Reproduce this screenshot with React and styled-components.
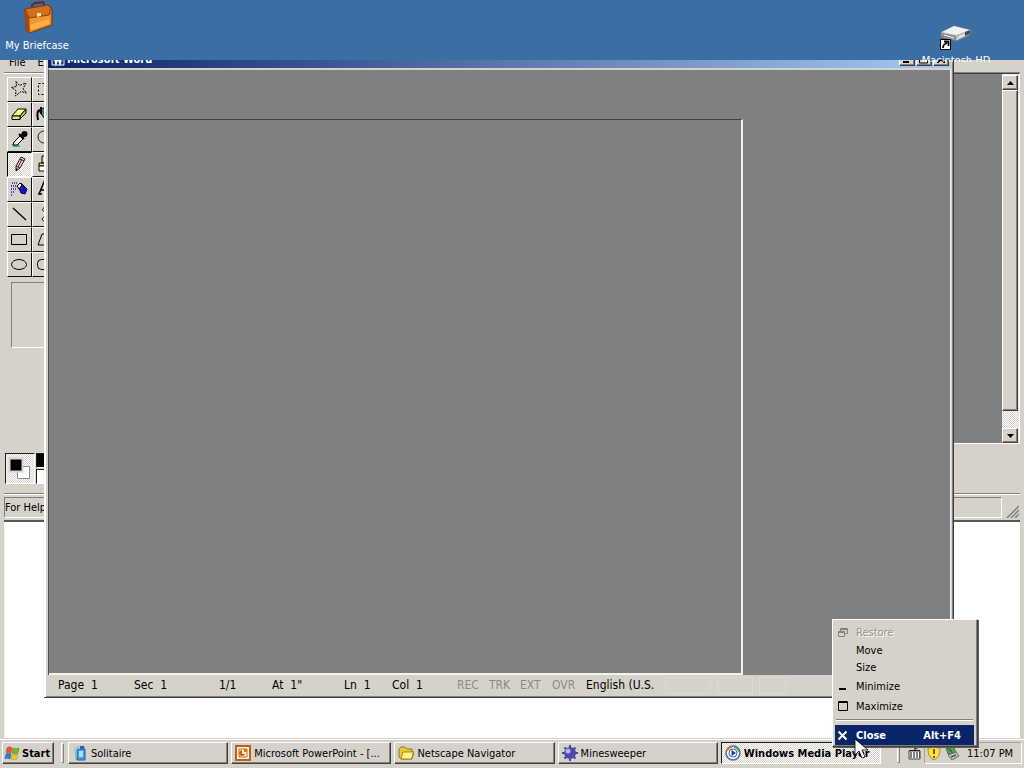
import React from 'react';
import styled, { createGlobalStyle, css } from 'styled-components';

const face = '#d6d2ca';
const dither = 'repeating-conic-gradient(#ffffff 0 25%, #d6d2ca 0 50%) 0 0 / 2px 2px';

const GlobalStyle = createGlobalStyle`
  * { box-sizing: border-box; }
  body {
    margin: 0;
    font-family: "DejaVu Sans Condensed", "Noto Sans", sans-serif;
    font-size: 11px;
    color: #000;
    overflow: hidden;
  }
  button { font: inherit; color: inherit; padding: 0; margin: 0; border: 0; background: none; cursor: default; }
  svg { display: block; flex: none; }
`;

const raised = css`
  background: ${face};
  border: 1px solid;
  border-color: #fff #404040 #404040 #fff;
  box-shadow: inset -1px -1px 0 #808080;
`;

const Desktop = styled.main`
  position: relative;
  display: flex;
  flex-direction: column;
  height: 100vh;
  min-height: 480px;
`;

const Wallpaper = styled.section`
  position: relative;
  z-index: 2;
  display: flex;
  justify-content: space-between;
  height: 60px;
  background: #3a6ea5;
`;

const Shortcut = styled.button`
  display: flex;
  flex-direction: column;
  align-items: center;
  justify-content: flex-start;
  gap: 4px;
  width: 74px;
  height: 62px;
  padding-top: 1px;
  overflow: hidden;
  color: #fff;
  white-space: nowrap;
  line-height: 14px;
`;

const RightShortcut = styled(Shortcut)`
  width: 136px;
  padding-top: 21px;
`;

const Windows = styled.section`
  position: relative;
  flex: 1;
  overflow: hidden;
  background: #fff;
  border: solid ${face};
  border-width: 0 4px 1px;
  box-shadow: inset 1px 0 0 #f4f2ee;
`;

const BrowserEdge = styled.div`
  position: absolute;
  top: 0;
  bottom: 0;
  left: -4px;
  right: -4px;
  border: solid;
  border-width: 0 2px 0 1px;
  border-color: #585858 #585858 #585858 #b0aca4;
`;

const PaintWindow = styled.section`
  position: absolute;
  top: -8px;
  left: -4px;
  right: -4px;
  height: 470px;
  display: flex;
  flex-direction: column;
  padding: 0 4px 2px;
  background: ${face};
  border-bottom: 2px solid #585858;
  box-shadow: inset 1px 0 0 ${face}, inset 2px 0 0 #fff, inset -1px 0 0 #404040, inset -2px 0 0 #808080;
`;

const MenuBar = styled.nav`
  display: flex;
  gap: 12px;
  height: 20px;
  padding-left: 5px;
  align-items: center;
`;

const PaintBody = styled.div`
  flex: 1;
  display: flex;
  min-height: 0;
  border-top: 1px solid #808080;
  box-shadow: inset 0 1px 0 #fff;
`;

const ToolPanel = styled.div`
  width: 58px;
  padding: 4px 3px;
`;

const ToolGrid = styled.div`
  display: grid;
  grid-template-columns: 25px 25px;
  grid-auto-rows: 25px;
`;

const Tool = styled.button`
  display: flex;
  align-items: center;
  justify-content: center;
  background: ${(p) => (p.$active ? dither : face)};
  border: 1px solid;
  border-color: ${(p) => (p.$active ? '#000 #fff #fff #000' : '#fff #101010 #101010 #fff')};
  & > svg { margin: 0 2px 2px 0; }
`;

const ToolOptions = styled.div`
  height: 66px;
  margin: 5px 4px;
  border: 1px solid;
  border-color: #808080 #fff #fff #808080;
`;

const CanvasFrame = styled.div`
  flex: 1;
  display: flex;
  border: 1px solid;
  border-color: #404040 #fff #fff #404040;
`;

const Canvas = styled.div`
  flex: 1;
  background: #808080;
`;

const ScrollBar = styled.div`
  display: flex;
  flex-direction: column;
  width: 17px;
  padding: 1px 1px 0 0;
  background: ${dither};
`;

const ScrollButton = styled.button`
  ${raised}
  display: flex;
  align-items: center;
  justify-content: center;
  height: 15px;
`;

const ScrollThumb = styled.div`
  ${raised}
  flex: 1;
  margin-bottom: 17px;
`;

const Palette = styled.div`
  display: flex;
  gap: 1px;
  height: 50px;
  padding: 9px 1px;
  border-bottom: 1px solid #808080;
  box-shadow: 0 1px 0 #fff;
`;

const CurrentColours = styled.div`
  width: 30px;
  height: 31px;
  background: ${dither};
  border: 1px solid;
  border-color: #202020 #fff #fff #202020;
`;

const Swatches = styled.div`
  display: grid;
  grid-template-columns: 16px 16px;
  grid-auto-rows: 15px;
  gap: 1px;
`;

const Swatch = styled.div`
  background: ${(p) => p.$colour};
  border: 1px solid;
  border-color: #202020 #fff #fff #202020;
`;

const PaintStatus = styled.footer`
  display: flex;
  gap: 4px;
  height: 24px;
  padding-top: 3px;
`;

const StatusText = styled.div`
  flex: 1;
  display: flex;
  align-items: center;
  border: 1px solid;
  border-color: #808080 #fff #fff #808080;
`;

const Grip = styled.div`
  display: flex;
  align-items: flex-end;
  width: 14px;
`;

const WordWindow = styled.section`
  position: absolute;
  top: -14px;
  left: 40px;
  right: 66px;
  height: 652px;
  display: flex;
  flex-direction: column;
  padding: 4px 2px 1px 4px;
  background: ${face};
  border: 0 solid #404040;
  border-width: 0 1px 1px 0;
  box-shadow: inset 2px 0 0 #fff, inset -1px -1px 0 #808080;
`;

const TitleBar = styled.header`
  display: flex;
  align-items: center;
  height: 18px;
  padding: 0 2px;
  gap: 1px;
  color: #fff;
  font-weight: bold;
  background: linear-gradient(to right, #0a246a, #a6caf0);
`;

const TitleText = styled.h1`
  flex: 1;
  margin: 0;
  font-size: 11px;
`;

const TitleButton = styled.button`
  ${raised}
  width: 16px;
  height: 14px;
  display: flex;
  align-items: center;
  justify-content: center;
`;

const Workspace = styled.div`
  flex: 1;
  display: flex;
  padding-top: 49px;
  background: #808080;
  border: solid;
  border-width: 2px 1px 0 1px;
  border-color: ${face} #f4f2ee #fff #505050;
`;

const DocumentPane = styled.div`
  width: 77%;
  border: solid;
  border-width: 1px 2px 2px 0;
  border-color: #404040 #f4f2ee #f4f2ee #404040;
`;

const WordStatus = styled.footer`
  display: flex;
  align-items: center;
  height: 21px;
  padding-left: 5px;
  font-size: 12px;
  white-space: pre;
`;

const StatusCell = styled.span`
  width: ${(p) => p.$width}px;
  height: 17px;
  padding-left: 5px;
  line-height: 17px;
  color: ${(p) => (p.$off ? '#8c8a84' : '#000')};
`;

const StatusBox = styled.span`
  width: ${(p) => p.$width}px;
  height: 17px;
  margin-right: 6px;
  border: 1px solid #dedad0;
`;

const TaskBar = styled.footer`
  position: relative;
  z-index: 3;
  display: flex;
  align-items: flex-start;
  height: 29px;
  padding: 3px 2px 0;
  background: ${face};
  box-shadow: inset 0 1px 0 #fff;
`;

const StartButton = styled.button`
  ${raised}
  display: flex;
  align-items: center;
  gap: 1px;
  width: 52px;
  height: 22px;
  padding-left: 1px;
  font-weight: bold;
`;

const Handle = styled.div`
  width: 3px;
  height: 20px;
  margin: 1px ${(p) => p.$after}px 0 ${(p) => p.$before}px;
  border: 1px solid;
  border-color: #fff #808080 #808080 #fff;
`;

const TaskList = styled.div`
  flex: 1;
  display: flex;
  gap: 3px;
  min-width: 0;
`;

const Task = styled.button`
  ${raised}
  flex: 1 1 0;
  display: flex;
  align-items: center;
  gap: 3px;
  height: 22px;
  min-width: 0;
  padding: 0 3px;
  white-space: nowrap;
  ${(p) => p.$active && css`
    background: ${dither};
    border-color: #202020 #fff #fff #202020;
    box-shadow: none;
    font-weight: bold;
  `}
`;

const KeyboardButton = styled.button`
  display: flex;
  align-items: center;
  height: 22px;
`;

const Tray = styled.div`
  display: flex;
  align-items: center;
  gap: 2px;
  width: 98px;
  height: 22px;
  margin-left: 3px;
  padding-left: 1px;
  border: 1px solid;
  border-color: #a8a49c #fff #fff #a8a49c;
`;

const Clock = styled.time`
  margin-left: 5px;
  white-space: nowrap;
`;

const ContextMenu = styled.div`
  position: absolute;
  z-index: 4;
  right: 46px;
  bottom: 21px;
  width: 146px;
  padding: 2px 3px 1px 2px;
  background: ${face};
  border: 1px solid;
  border-color: #fff #404040 #404040 #fff;
  box-shadow: inset -1px -1px 0 #808080, 1px 1px 0 #606060;
`;

const MenuItem = styled.button`
  display: grid;
  grid-template-columns: 19px 1fr auto;
  align-items: center;
  width: 100%;
  height: ${(p) => (p.$icon ? 20 : 17)}px;
  padding: 0 13px 0 2px;
  text-align: left;
  &:disabled { color: #96938d; text-shadow: 1px 1px 0 #fff; }
  ${(p) => p.$selected && css`
    background: #0a246a;
    color: #fff;
    font-weight: bold;
  `}
`;

const MenuLine = styled.div`
  height: 2px;
  margin: 3px 1px 4px;
  border-top: 1px solid #808080;
  border-bottom: 1px solid #fff;
`;

const Pointer = styled.svg`
  position: absolute;
  z-index: 5;
  right: 153px;
  bottom: 8px;
`;

const Pic = ({ w = 16, h = w, children, ...rest }) => (
  <svg width={w} height={h} viewBox={`0 0 ${w} ${h}`} fill="none" aria-hidden="true" {...rest}>{children}</svg>
);

const toolIcons = [
  ['Free-form select', <Pic w={18}><path d="M6 1.500l3.500 4L16 3l-3 6 3.500 4-5.500-1.500L5.500 16 6 10.500 1.500 7.500l5-1z" stroke="#000" strokeDasharray="2 1" /></Pic>],
  ['Select', <Pic w={18}><path d="M3.500 3.500h13v11h-13z" stroke="#000" strokeDasharray="2 2" /></Pic>],
  ['Eraser', <Pic w={18}><path d="M2 11l6-7h8l-6 7z" fill="#ffff90" stroke="#000" /><path d="M10 11l6-7v4l-6 6z" fill="#c8c86c" stroke="#000" /><path d="M2 11h8v3.500H2z" fill="#eeee88" stroke="#000" /></Pic>],
  ['Fill', <Pic w={18}><path d="M4 6l6-4 6 6-6 6z" fill="#3f8b80" stroke="#000" /><path d="M5 5C2 5 2 10 3 15M6 2v7" stroke="#000" strokeWidth="2" /></Pic>],
  ['Pick colour', <Pic w={18}><path d="M2 14h7l1 3H3z" fill="#38b09c" /><path d="M3 15l1-3 6-6 3 3-6 6z" fill="#e8fff8" stroke="#000" /><path d="M9 4l5 5M11 6l3-3" stroke="#000" strokeWidth="2" /><circle cx="14.500" cy="4" r="3" fill="#000" /></Pic>],
  ['Magnifier', <Pic w={18}><circle cx="9" cy="7" r="6" stroke="#202020" /><path d="M13 11l4 5" stroke="#000" strokeWidth="2" /></Pic>],
  ['Pencil', <Pic w={18}><path d="M6 11l5-9 4 2-5 9-4 3z" fill="#e8d8d0" stroke="#301010" /><path d="M10 4l4 2M6 11l4 2M12 4l-4 8" stroke="#501818" /><path d="M6 13l2 1-2 2z" fill="#000" /></Pic>],
  ['Brush', <Pic w={18}><path d="M7 1h3v7H7zM4 8h9v3H4z" fill="#f0d890" stroke="#000" /><path d="M4 11h9v5H4z" fill="#fff" stroke="#000" /></Pic>],
  ['Airbrush', <Pic w={18}><path d="M8 6l3-3 6 6-2 5-4-1z" fill="#1818b0" stroke="#000060" /><path d="M7 6l3-3 2 2-3 4z" fill="#fff" stroke="#000" /><path d="M2 3h5M1 6h6M1 9h5M1 12h3M1 15h2" stroke="#4444c0" strokeDasharray="1 1" strokeWidth="2" /></Pic>],
  ['Text', <Pic w={18}><path d="M3 14h4M4 14l5-12 4 12M11 14h5M6 10h6" stroke="#000" strokeWidth="1.5" /></Pic>],
  ['Line', <Pic w={18}><path d="M3 3l13 12" stroke="#000" strokeWidth="1.300" /></Pic>],
  ['Curve', <Pic w={18}><path d="M10 2c-8 5 6 4 0 9-4 3-4 4 1 6" stroke="#000" /></Pic>],
  ['Rectangle', <Pic w={18}><path d="M1.500 4.500h15v10h-15z" stroke="#000" /></Pic>],
  ['Polygon', <Pic w={18}><path d="M3 15l4-11h6l-2 6h6v5z" stroke="#000" /></Pic>],
  ['Ellipse', <Pic w={18}><ellipse cx="9" cy="9.500" rx="7.500" ry="5" stroke="#000" /></Pic>],
  ['Rounded rectangle', <Pic w={18}><rect x="2.500" y="4.500" width="15" height="10" rx="4" stroke="#000" /></Pic>],
];

const Briefcase = () => (
  <Pic w={32} h={34}>
    <path d="M11 7V4l3-2 8-1 1 2v4" stroke="#6d2617" strokeWidth="2" />
    <path d="M4 8L27 4l4 3v17L9 32l-4-3z" fill="#e8801c" stroke="#713510" />
    <path d="M7 11l22-4v16L9 30z" fill="#f29530" />
    <path d="M4 8l23-4 3 3-2 7-20 3z" fill="#d0701d" stroke="#8b3d10" />
    <path d="M3 9l2 20 4 3-1-17z" fill="#a4480f" />
    <path d="M9 24l19-6v5L10 29z" fill="#ffb149" />
    <path d="M16 12h4v3l-4 1z" fill="#ffe29a" />
  </Pic>
);

const Drive = () => (
  <Pic w={32} h={29}>
    <path d="M1 11L14 5l17 4-1 5-14 6-15-4z" fill="#b9b9bd" stroke="#707478" />
    <path d="M2 11L14 5l16 4-14 5z" fill="#eef3f6" />
    <path d="M2 12l14 3v4L2 16z" fill="#88898d" />
    <path d="M17 16l13-6v3l-13 6z" fill="#d2d2d4" />
    <path d="M4 14l10 3M19 16l5-2" stroke="#f4f4f4" />
    <path d="M25 11l5-2v4l-5 2z" fill="#4d4860" />
    <path d="M.5 18.500h10v10H.5z" fill="#fff" stroke="#000" />
    <path d="M3 27c0-3 1-4 4-5M4 20.500h4.500V25" stroke="#000" strokeWidth="1.8" />
  </Pic>
);

const StartLogo = () => (
  <Pic w={17} h={16}>
    <path d="M3 3c2-2 4-1 5 0L7 8C5 7 4 7 2 8z" fill="#e8582c" stroke="#9b4b38" strokeWidth=".5" />
    <path d="M9 3c2 1 4 1 6 0l-1 5c-2 1-4 1-6 0z" fill="#7eb52c" stroke="#4c7b2b" strokeWidth=".5" />
    <path d="M2 9c2-1 3-1 5 0l-1 5c-2-1-4-1-5 0z" fill="#347cd7" stroke="#284c91" strokeWidth=".5" />
    <path d="M8 9c2 1 4 1 6 0l-1 5c-2 1-4 1-6 0z" fill="#f3c62c" stroke="#a38a2d" strokeWidth=".5" />
  </Pic>
);

const tasks = [
  ['Solitaire', <Pic><path d="M3 3l9-2 1 13H4z" fill="#f8ffff" stroke="#8ab1c9" /><path d="M5 4h8v11H5z" fill="#3c9de0" stroke="#2565a5" /><path d="M7 6h4v6H7z" fill="#a1e0ff" /><path d="M8 1h4v3H8z" fill="#345ca8" /></Pic>],
  ['Microsoft PowerPoint - [...', <Pic><path d="M1 1h14v14H1z" fill="#fff1d8" stroke="#bc651a" strokeWidth="2" /><path d="M4 4h8v8H4z" stroke="#c66c20" /><path d="M7 5a3 3 0 103 4H7z" fill="#bd6518" /><path d="M9 4h3v3H9z" fill="#d47824" /></Pic>],
  ['Netscape Navigator', <Pic><path d="M1 4l2-2h4l2 2h5v3h2l-2 7H3L1 12z" fill="#e6c83b" stroke="#8c751b" /><path d="M3 14l2-7h10.500l-2 7z" fill="#fff28a" stroke="#a18925" /></Pic>],
  ['Minesweeper', <Pic><path d="M8 0v16M0 8h16M2.500 2.500l11 11M13.500 2.500l-11 11" stroke="#464589" strokeWidth="2" /><circle cx="8" cy="8" r="6" fill="#4a49b2" /><circle cx="6" cy="6" r="2.500" fill="#b5b5ed" /></Pic>],
  ['Windows Media Player', <Pic><circle cx="8" cy="8" r="7" fill="#f0f5ff" stroke="#55699b" strokeWidth="1.500" /><path d="M2 6a6 6 0 015-4" stroke="#e27d38" strokeWidth="2" /><path d="M9 2a6 6 0 015 5" stroke="#55a258" strokeWidth="2" /><circle cx="8" cy="8" r="4" fill="#fff" stroke="#4368b9" /><path d="M6.500 5l4.500 3-4.500 3z" fill="#173c9a" /></Pic>],
];

const menu = [
  { label: 'Restore', disabled: true, icon: <Pic w={11}><path d="M3.500 4V1.500h7v5H8M3 2.500h8M1.500 4.500h6v5h-6zM1 5.500h7" stroke="#85827d" /></Pic> },
  { label: 'Move' },
  { label: 'Size' },
  { label: 'Minimize', icon: <Pic w={11}><path d="M2 7h7v2H2z" fill="#000" /></Pic> },
  { label: 'Maximize', icon: <Pic w={11}><path d="M1.500 .5h9v9h-9zM1 1.500h10" stroke="#000" /></Pic> },
];

const cells = [['Page  1', 76], ['Sec  1', 85], ['1/1', 53], ['At  1"', 72], ['Ln  1', 48], ['Col  1', 65],
  ['REC', 32, true], ['TRK', 31, true], ['EXT', 32, true], ['OVR', 34, true], ['English (U.S.', 84]];

export default function App() {
  return (
    <>
      <GlobalStyle />
      <Desktop>
        <Wallpaper>
          <Shortcut><Briefcase />My Briefcase</Shortcut>
          <RightShortcut><Drive />Macintosh HD</RightShortcut>
        </Wallpaper>
        <Windows>
          <BrowserEdge />
          <PaintWindow aria-label="Paint">
            <MenuBar><button>File</button><button>Edit</button></MenuBar>
            <PaintBody>
              <ToolPanel>
                <ToolGrid>
                  {toolIcons.map(([name, icon]) => (
                    <Tool key={name} aria-label={name} $active={name === 'Pencil'}>{icon}</Tool>
                  ))}
                </ToolGrid>
                <ToolOptions />
              </ToolPanel>
              <CanvasFrame>
                <Canvas />
                <ScrollBar>
                  <ScrollButton aria-label="Scroll up"><Pic w={7} h={4}><path d="M0 4l3.500-4L7 4z" fill="#000" /></Pic></ScrollButton>
                  <ScrollThumb />
                  <ScrollButton aria-label="Scroll down"><Pic w={7} h={4}><path d="M0 0l3.500 4L7 0z" fill="#000" /></Pic></ScrollButton>
                </ScrollBar>
              </CanvasFrame>
            </PaintBody>
            <Palette>
              <CurrentColours>
                <Pic w={28} h={29}>
                  <path d="M11.500 12.500h12v12h-12z" fill="#fff" stroke="#909090" />
                  <path d="M3.500 4.500h13v13h-13z" fill="#000" stroke="#d8d4cc" strokeWidth="2" />
                </Pic>
              </CurrentColours>
              <Swatches><Swatch $colour="#000" /><Swatch $colour="#808080" /><Swatch $colour="#fff" /><Swatch $colour="#c0c0c0" /></Swatches>
            </Palette>
            <PaintStatus>
              <StatusText>For Help</StatusText>
              <Grip><Pic w={13}><path d="M1 13L13 1M5 13l8-8M9 13l4-4" stroke="#808080" strokeWidth="1.500" /></Pic></Grip>
            </PaintStatus>
          </PaintWindow>

          <WordWindow aria-label="Microsoft Word">
            <TitleBar>
              <Pic><path d="M2 2h12v12H2z" fill="#1d3b8b" stroke="#fff" /><path d="M4 4l2 8 2-6 2 6 2-8" stroke="#fff" strokeWidth="2" /></Pic>
              <TitleText>Microsoft Word</TitleText>
              <TitleButton aria-label="Minimize window"><Pic w={10} h={8}><path d="M1 6h6v2H1z" fill="#000" /></Pic></TitleButton>
              <TitleButton aria-label="Maximize window"><Pic w={10} h={9}><path d="M.5 1h8v7h-8z" stroke="#000" /></Pic></TitleButton>
              <TitleButton aria-label="Close window"><Pic w={8} h={8}><path d="M0 0l8 8M8 0L0 8" stroke="#000" strokeWidth="2" /></Pic></TitleButton>
            </TitleBar>
            <Workspace><DocumentPane /></Workspace>
            <WordStatus>
              {cells.map(([text, width, off]) => <StatusCell key={text} $width={width} $off={off}>{text}</StatusCell>)}
              <StatusBox $width={46} /><StatusBox $width={36} /><StatusBox $width={27} />
            </WordStatus>
          </WordWindow>
        </Windows>

        <TaskBar>
          <StartButton><StartLogo />Start</StartButton>
          <Handle $before={7} $after={4} />
          <TaskList>
            {tasks.map(([name, icon], i) => <Task key={name} $active={i === 4}>{icon}{name}</Task>)}
          </TaskList>
          <Handle $before={16} $after={8} />
          <KeyboardButton aria-label="Keyboard layout">
            <Pic w={13} h={16}><path d="M7 5V3h3V1M1 5.500h11" stroke="#000" /><path d="M1 6h11v8H1z" fill="#fff" stroke="#404040" /><path d="M2 8h10M2 10h10M2 12h10" stroke="#000" strokeDasharray="2 1" /></Pic>
          </KeyboardButton>
          <Tray>
            <Pic><path d="M8 1c2 2 4 2 6 2 0 6-1 9-6 12C3 12 2 9 2 3c2 0 4 0 6-2z" fill="#ffe13e" stroke="#a78b22" /><path d="M8 4v5M8 11v2" stroke="#3e3920" strokeWidth="1.500" /></Pic>
            <Pic><path d="M2 3l7-2 3 6-8 2z" fill="#49a94e" stroke="#54705a" /><path d="M4 10l8-3 3 4-7 4z" fill="#c3c3b9" stroke="#66665e" /><path d="M3 2l5 5M7 12l5-2" stroke="#316b38" strokeWidth="1.500" /></Pic>
            <Clock>11:07 PM</Clock>
          </Tray>
        </TaskBar>

        <ContextMenu role="menu">
          {menu.map(({ label, icon, disabled }) => (
            <MenuItem key={label} role="menuitem" disabled={disabled} $icon={!!icon}>
              <span>{icon}</span><span>{label}</span>
            </MenuItem>
          ))}
          <MenuLine />
          <MenuItem role="menuitem" $icon $selected>
            <Pic w={11}><path d="M1.500 1.500l8 8M9.500 1.500l-8 8" stroke="#fff" strokeWidth="2" /></Pic>
            <span>Close</span><span>Alt+F4</span>
          </MenuItem>
        </ContextMenu>
        <Pointer width="17" height="22" viewBox="0 0 17 22" aria-hidden="true">
          <path d="M1 1v16l4-4 3 7 3-1-3-7h6z" fill="#fff" stroke="#000" strokeWidth=".8" />
        </Pointer>
      </Desktop>
    </>
  );
}
